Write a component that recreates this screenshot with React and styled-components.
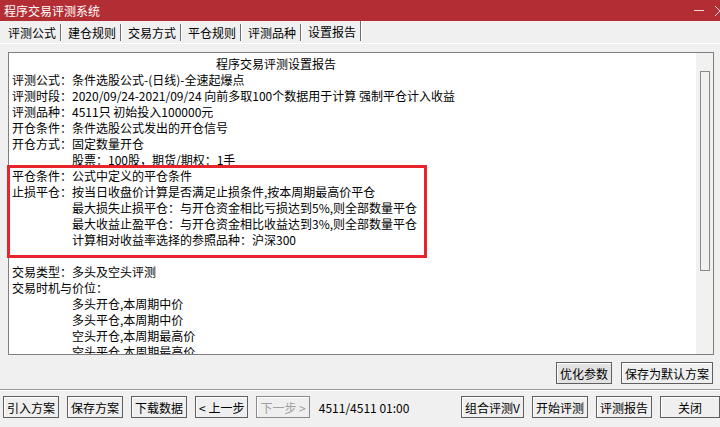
import styled, { createGlobalStyle } from 'styled-components'

const GlobalStyle = createGlobalStyle`
    html, body {
        margin: 0;
        padding: 0;
        background: #f0f0f0;
        overflow: hidden;
    }
    body {
        font-family: "Noto Sans CJK SC", "Liberation Sans", sans-serif;
        font-size: 12px;
        color: #000;
    }
`

const tabs = ['评测公式', '建仓规则', '交易方式', '平仓规则', '评测品种', '设置报告']

const lines = [
    ['评测公式：', '条件选股公式-(日线)-全速起爆点'],
    ['评测时段：', '2020/09/24-2021/09/24 向前多取100个数据用于计算 强制平仓计入收益'],
    ['评测品种：', '4511只 初始投入100000元'],
    ['开仓条件：', '条件选股公式发出的开仓信号'],
    ['开仓方式：', '固定数量开仓'],
    ['', '股票：100股，期货/期权：1手'],
    ['平仓条件：', '公式中定义的平仓条件'],
    ['止损平仓：', '按当日收盘价计算是否满足止损条件,按本周期最高价平仓'],
    ['', '最大损失止损平仓：与开仓资金相比亏损达到5%,则全部数量平仓'],
    ['', '最大收益止盈平仓：与开仓资金相比收益达到3%,则全部数量平仓'],
    ['', '计算相对收益率选择的参照品种：沪深300'],
    ['', ''],
    ['交易类型：', '多头及空头评测'],
    ['交易时机与价位：', ''],
    ['', '多头开仓,本周期中价'],
    ['', '多头平仓,本周期中价'],
    ['', '空头开仓,本周期最高价'],
    ['', '空头平仓,本周期最高价'],
]

function App() {
    return (
        <Window>
            <GlobalStyle />
            <TitleBar>
                <Title>程序交易评测系统</Title>
                <WinButtons>
                    <MinIcon />
                    <svg width="12" height="12" viewBox="0 0 12 12">
                        <path d="M1 1 L11 11 M11 1 L1 11" stroke="#f3d6d7" strokeWidth="1" />
                    </svg>
                </WinButtons>
            </TitleBar>
            <TabRow>
                {tabs.map((t, i) => (
                    <Tab key={t} $active={i === tabs.length - 1}>
                        {t}
                    </Tab>
                ))}
            </TabRow>
            <Panel>
                <TextBox>
                    <Content>
                        <ReportTitle>程序交易评测设置报告</ReportTitle>
                        {lines.map(([label, value], i) => (
                            <Line key={i}>
                                <Label $wide={label.length > 5}>{label}</Label>
                                <span>{value}</span>
                            </Line>
                        ))}
                    </Content>
                    <ScrollTrack>
                        <Thumb />
                    </ScrollTrack>
                </TextBox>
                <Highlight />
                <ActionRow>
                    <Button $focus>优化参数</Button>
                    <Button>保存为默认方案</Button>
                </ActionRow>
            </Panel>
            <BottomBar>
                <Button>引入方案</Button>
                <Button>保存方案</Button>
                <Button>下载数据</Button>
                <Button>&lt; 上一步</Button>
                <Button $disabled>下一步 &gt;</Button>
                <Status>4511/4511 01:00</Status>
                <Spacer />
                <Button>组合评测V</Button>
                <Button>开始评测</Button>
                <Button>评测报告</Button>
                <Button $wide>关闭</Button>
            </BottomBar>
        </Window>
    )
}
export default App

const Window = styled.div`
    width: 720px;
    height: 427px;
    display: flex;
    flex-direction: column;
    background: #f0f0f0;
    overflow: hidden;
`

const TitleBar = styled.div`
    height: 21px;
    background: #b32e34;
    display: flex;
    align-items: center;
    justify-content: space-between;
    padding-left: 4px;
`

const Title = styled.div`
    color: #fff;
    font-size: 12px;
    line-height: 21px;
`

const WinButtons = styled.div`
    display: flex;
    align-items: center;
    gap: 10px;
    margin-right: -6px;
`

const MinIcon = styled.div`
    width: 10px;
    height: 1px;
    background: #f3d6d7;
`

const TabRow = styled.div`
    height: 22px;
    display: flex;
    align-items: flex-end;
    padding-left: 3px;
    border-bottom: 1px solid #fff;
    box-sizing: content-box;
`

const Tab = styled.div`
    width: 58px;
    height: ${(p) => (p.$active ? '20px' : '17px')};
    line-height: ${(p) => (p.$active ? '17px' : '17px')};
    padding-left: 5px;
    box-sizing: border-box;
    border-right: 1px solid #6d6d6d;
    box-shadow: 1px 0 0 #fff;
    margin-right: 2px;
    margin-bottom: 2px;
    font-size: 12px;
    white-space: nowrap;
    align-self: ${(p) => (p.$active ? 'flex-start' : 'flex-end')};
    padding-top: ${(p) => (p.$active ? '2px' : '0')};
`

const Panel = styled.div`
    position: relative;
    padding: 8px 6px 0 8px;
`

const TextBox = styled.div`
    height: 303px;
    border: 1px solid #7f7f7f;
    background: #fff;
    display: flex;
    box-sizing: border-box;
    overflow: hidden;
`

const Content = styled.div`
    flex: 1;
    padding: 3px 0 0 3px;
    line-height: 16px;
    white-space: nowrap;
    overflow: hidden;
`

const ReportTitle = styled.div`
    padding-left: 204px;
`

const Line = styled.div`
    display: flex;
    height: 16px;
`

const Label = styled.span`
    width: ${(p) => (p.$wide ? 'auto' : '60px')};
    flex-shrink: 0;
`

const ScrollTrack = styled.div`
    width: 17px;
    background: #f2f1f0;
    padding-top: 18px;
    display: flex;
    justify-content: center;
`

const Thumb = styled.div`
    width: 8px;
    height: 198px;
    border: 1px solid #8a8a8a;
    background: #f2f1f0;
`

const Highlight = styled.div`
    position: absolute;
    left: 7px;
    top: 121px;
    width: 420px;
    height: 93px;
    border: 3px solid #e8242c;
    box-sizing: border-box;
    pointer-events: none;
`

const ActionRow = styled.div`
    display: flex;
    justify-content: flex-end;
    gap: 9px;
    margin-top: 7px;
    padding-right: 1px;
    height: 22px;
`

const Button = styled.div`
    height: 22px;
    padding: 0 ${(p) => (p.$wide ? '17px' : '3px')};
    box-sizing: border-box;
    display: flex;
    align-items: center;
    justify-content: center;
    white-space: nowrap;
    font-size: 12px;
    background: ${(p) => (p.$focus ? '#e3e3e3' : '#efefef')};
    color: ${(p) => (p.$disabled ? '#a0a0a0' : '#000')};
    border: 1px solid ${(p) => (p.$disabled ? '#8a8a8a' : '#5f5f5f')};
    box-shadow: inset 1px 1px 0 #fff;
    flex-shrink: 0;
`

const BottomBar = styled.div`
    margin-top: 5px;
    border-top: 1px solid #9a9a9a;
    box-shadow: inset 0 1px 0 #fff;
    padding: 6px 0 0 3px;
    display: flex;
    gap: 8px;
    align-items: center;
`

const Status = styled.div`
    margin-left: 1px;
    font-size: 12px;
`

const Spacer = styled.div`
    flex: 1;
`
